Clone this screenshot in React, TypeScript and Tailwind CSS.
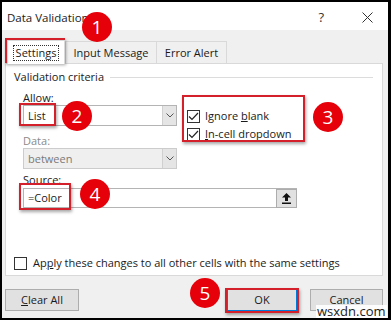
import React from 'react';

const font = { fontFamily: '"Open Sans", "Noto Sans", sans-serif' };

function Chevron() {
  return (
    <svg width="8" height="5" viewBox="0 0 8 5" fill="none" stroke="#555" strokeWidth="1">
      <path d="M0.5 0.5l3.5 3.5 3.5-3.5" />
    </svg>
  );
}

function Check({ checked }: { checked: boolean }) {
  return (
    <div className="w-[13px] h-[13px] border border-[#333] bg-white flex items-center justify-center shrink-0">
      {checked && (
        <svg width="11" height="9" viewBox="0 0 11 9" fill="none" stroke="#222" strokeWidth="1.2">
          <path d="M1 4.5l3 3 6-6.5" />
        </svg>
      )}
    </div>
  );
}

function Marker({ n, left, top }: { n: number; left: string; top: string }) {
  return (
    <div
      className={`absolute ${left} ${top} w-[30px] h-[30px] rounded-full bg-[#e5000a] text-white text-[19px] leading-[30px] flex items-center justify-center`}
      style={font}
    >
      {n}
    </div>
  );
}

export default function App() {
  return (
    <div className="relative w-[391px] h-[320px] overflow-hidden text-[11px] leading-[16px] text-[#1a1a1a]" style={font}>
      <div className="h-full flex flex-col border-t-2 border-l-2 border-b-2 border-r-[3px] border-black bg-[#f0f0f0]">
        {/* title bar */}
        <div className="h-[28px] bg-white flex items-center pl-[5px] pr-[15px]">
          <span className="text-[11.5px] mt-[4px]">Data Validation</span>
          <span className="ml-auto mr-[38px] text-[13px] text-[#333] mt-[2px]">?</span>
          <svg width="11" height="11" viewBox="0 0 11 11" stroke="#333" strokeWidth="1" className="mt-[2px]">
            <path d="M0.5 0.5l10 10M10.5 0.5l-10 10" />
          </svg>
        </div>

        {/* tabs */}
        <div className="flex items-end pl-[5px] pt-[9px] h-[33px]">
          <div className="h-[24px] w-[58px] bg-white border border-[#d9d9d9] border-b-0 flex items-center justify-center relative z-10 -mb-px">
            <span className="border border-dotted border-[#333] px-[2px] leading-[14px]">Settings</span>
          </div>
          <div className="h-[22px] w-[92px] border border-[#d9d9d9] border-b-0 flex items-center justify-center">Input Message</div>
          <div className="h-[22px] w-[70px] border border-[#d9d9d9] border-b-0 border-l-0 flex items-center justify-center">Error Alert</div>
        </div>

        {/* panel */}
        <div className="mx-[3px] mr-[5px] h-[213px] bg-white border border-[#d9d9d9] flex flex-col pl-[8px] pr-[7px]">
          <div className="flex items-center mt-[5px] h-[16px]">
            <span>Validation criteria</span>
            <div className="flex-1 h-px bg-[#dcdcdc] ml-[6px] mr-[2px]" />
          </div>

          <div className="flex mt-[5px] pl-[9px]">
            <div className="flex flex-col w-[154px]">
              <span className="h-[15px] leading-[15px]">Allow:</span>
              <div className="h-[21px] border border-[#b4b4b4] bg-white flex items-center pl-[4px]">
                <span className="flex-1">List</span>
                <div className="w-[14px] h-[19px] bg-[#e5e5e5] border-l border-[#d0d0d0] flex items-center justify-center">
                  <Chevron />
                </div>
              </div>
              <span className="mt-[8px] h-[14px] leading-[14px] text-[#8a8a8a]">Data:</span>
              <div className="h-[21px] border border-[#cccccc] bg-[#efefef] flex items-center pl-[4px] text-[#7a7a7a]">
                <span className="flex-1">between</span>
                <div className="w-[14px] h-[19px] bg-[#e5e5e5] border-l border-[#d0d0d0] flex items-center justify-center">
                  <Chevron />
                </div>
              </div>
            </div>
            <div className="flex flex-col ml-[10px] mt-[17px]">
              <div className="flex items-center gap-[5px] h-[18px]">
                <Check checked />
                <span>
                  Ignore <span className="underline">b</span>lank
                </span>
              </div>
              <div className="flex items-center gap-[5px] h-[18px]">
                <Check checked />
                <span>
                  <span className="underline">I</span>n-cell dropdown
                </span>
              </div>
            </div>
          </div>

          <span className="mt-[3px] pl-[9px] h-[16px] leading-[16px]">Source:</span>
          <div className="ml-[9px] w-[274px] h-[20px] border border-[#b4b4b4] bg-white flex items-center pl-[4px]">
            <span className="flex-1">=Color</span>
            <div className="w-[21px] h-[19px] bg-[#e1e1e1] border border-[#adadad] -mr-px flex items-center justify-center">
              <svg width="9" height="11" viewBox="0 0 9 11" fill="#111">
                <path d="M4.5 0L0 4.5h3V8h3V4.5h3z" />
                <rect x="0" y="9.5" width="9" height="1.5" />
              </svg>
            </div>
          </div>

          <div className="flex items-center gap-[6px] mt-[47px] h-[16px]">
            <Check checked={false} />
            <span>
              Ap<span className="underline">p</span>ly these changes to all other cells with the same settings
            </span>
          </div>
        </div>

        {/* buttons */}
        <div className="flex items-start pl-[3px] pr-[5px] mt-[13px]">
          <div className="w-[74px] h-[22px] bg-[#e1e1e1] border border-[#adadad] flex items-center justify-center">
            <span>
              <span className="underline">C</span>lear All
            </span>
          </div>
          <div className="ml-auto w-[70px] h-[22px] bg-[#e1e1e1] border border-[#0078d7] flex items-center justify-center">
            OK
          </div>
          <div className="ml-[13px] w-[73px] h-[22px] bg-[#e1e1e1] border border-[#adadad] flex items-center justify-center">
            Cancel
          </div>
        </div>
      </div>

      {/* annotations */}
      <div className="absolute left-[5px] top-[38px] w-[60px] h-[25px] border-2 border-[#d4202a] shadow-[1px_2px_3px_rgba(0,0,0,0.35)]" />
      <Marker n={1} left="left-[82px]" top="top-[12px]" />
      <div className="absolute left-[19px] top-[103px] w-[37px] h-[23px] border-2 border-[#d4202a] shadow-[1px_2px_3px_rgba(0,0,0,0.35)]" />
      <Marker n={2} left="left-[62px]" top="top-[101px]" />
      <div className="absolute left-[182px] top-[95px] w-[123px] h-[47px] border-2 border-[#d4202a] shadow-[1px_2px_3px_rgba(0,0,0,0.35)]" />
      <Marker n={3} left="left-[313px]" top="top-[102px]" />
      <div className="absolute left-[19px] top-[183px] w-[52px] h-[27px] border-2 border-[#d4202a] shadow-[1px_2px_3px_rgba(0,0,0,0.35)]" />
      <Marker n={4} left="left-[80px]" top="top-[179px]" />
      <div className="absolute left-[225px] top-[288px] w-[74px] h-[25px] border-2 border-[#d4202a] shadow-[1px_2px_3px_rgba(0,0,0,0.35)]" />
      <Marker n={5} left="left-[190px]" top="top-[278px]" />

      <div className="absolute left-[316px] top-[305px] text-[13px] leading-[13px] text-[#222] bg-white/90 px-[1px]">
        wsxdn.com
      </div>
    </div>
  );
}
